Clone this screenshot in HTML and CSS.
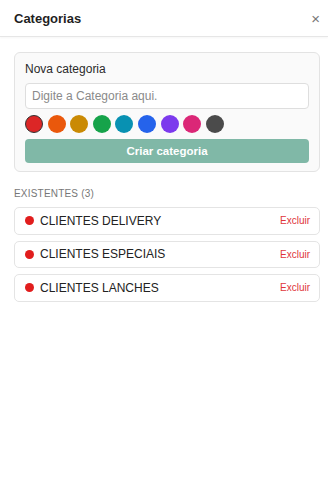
FILE: index.html
```html
<!DOCTYPE html>
<html lang="pt-br">
<head>
    <meta charset="utf-8">
    <title>Categorias</title>
    <link rel="stylesheet" href="styles.css">
</head>
<body>
    <div id="panel">
        <div class="panel-header">
            <span class="panel-title">Categorias</span>
            <span class="panel-close">&times;</span>
        </div>
        <div class="panel-body">
            <div class="new-card">
                <div class="new-label">Nova categoria</div>
                <input class="new-input" type="text" placeholder="Digite a Categoria aqui." autofocus>
                <div class="swatches">
                    <span class="swatch selected" style="background:#dc2626"></span>
                    <span class="swatch" style="background:#ea580c"></span>
                    <span class="swatch" style="background:#ca8a04"></span>
                    <span class="swatch" style="background:#16a34a"></span>
                    <span class="swatch" style="background:#0891b2"></span>
                    <span class="swatch" style="background:#2563eb"></span>
                    <span class="swatch" style="background:#7c3aed"></span>
                    <span class="swatch" style="background:#db2777"></span>
                    <span class="swatch" style="background:#4b4b4b"></span>
                </div>
                <div class="create-button">Criar categoria</div>
            </div>

            <div class="list-title">EXISTENTES (3)</div>
            <div class="cat-list">
                <div class="cat-row">
                    <span class="cat-dot"></span>
                    <span class="cat-name">CLIENTES DELIVERY</span>
                    <a class="cat-delete">Excluir</a>
                </div>
                <div class="cat-row">
                    <span class="cat-dot"></span>
                    <span class="cat-name">CLIENTES ESPECIAIS</span>
                    <a class="cat-delete">Excluir</a>
                </div>
                <div class="cat-row">
                    <span class="cat-dot"></span>
                    <span class="cat-name">CLIENTES LANCHES</span>
                    <a class="cat-delete">Excluir</a>
                </div>
            </div>
        </div>
    </div>
</body>
</html>
```

FILE: styles.css
```css
html,body{
    margin: 0;
    background-color: white;
}

#panel{
    font-family: "Liberation Sans", Arial, sans-serif;
    color: #222;
}

.panel-header{
    display: flex;
    align-items: center;
    justify-content: space-between;
    height: 36px;
    padding: 0 8px 0 14px;
    border-bottom: 1px solid #e6e6e6;
    box-shadow: 0 1px 2px rgba(0,0,0,0.04);
}
.panel-title{
    font-size: 13px;
    font-weight: bold;
    color: #1f1f1f;
}
.panel-close{
    font-size: 15px;
    color: #777;
    line-height: 1;
}

.panel-body{
    padding: 15px 8px 0 14px;
}

.new-card{
    border: 1px solid #e3e3e3;
    border-radius: 6px;
    background-color: #fafafa;
    padding: 9px 10px 8px 10px;
}
.new-label{
    font-size: 12px;
    color: #2a2a2a;
    margin-bottom: 7px;
}
.new-input{
    display: block;
    box-sizing: border-box;
    width: 100%;
    height: 26px;
    padding: 0 6px;
    border: 1px solid #dedede;
    border-radius: 4px;
    background: white;
    font-family: inherit;
    font-size: 12px;
    color: #333;
    outline: none;
}
.new-input::placeholder{
    color: #8a8a8a;
}
.swatches{
    display: flex;
    gap: 4.6px;
    margin: 6px 0 6px 0;
}
.swatch{
    width: 18px;
    height: 18px;
    border-radius: 50%;
    box-sizing: border-box;
}
.swatch.selected{
    border: 1.5px solid #333;
}
.create-button{
    height: 24px;
    line-height: 24px;
    border-radius: 4px;
    background-color: #80b8a7;
    color: white;
    text-align: center;
    font-size: 11.5px;
    font-weight: bold;
}

.list-title{
    margin: 16px 0 7px 0;
    font-size: 10px;
    line-height: 12px;
    color: #777;
    letter-spacing: 0.2px;
}
.cat-list{
    display: flex;
    flex-direction: column;
    gap: 6px;
}
.cat-row{
    display: flex;
    align-items: center;
    box-sizing: border-box;
    height: 27.5px;
    padding: 0 9px 0 10px;
    border: 1px solid #e4e4e4;
    border-radius: 5px;
    background: white;
}
.cat-dot{
    flex: none;
    width: 9px;
    height: 9px;
    border-radius: 50%;
    background-color: #e11d1d;
    margin-right: 6px;
}
.cat-name{
    flex: 1;
    font-size: 12px;
    color: #222;
}
.cat-delete{
    font-size: 10px;
    color: #e0353b;
}
```
